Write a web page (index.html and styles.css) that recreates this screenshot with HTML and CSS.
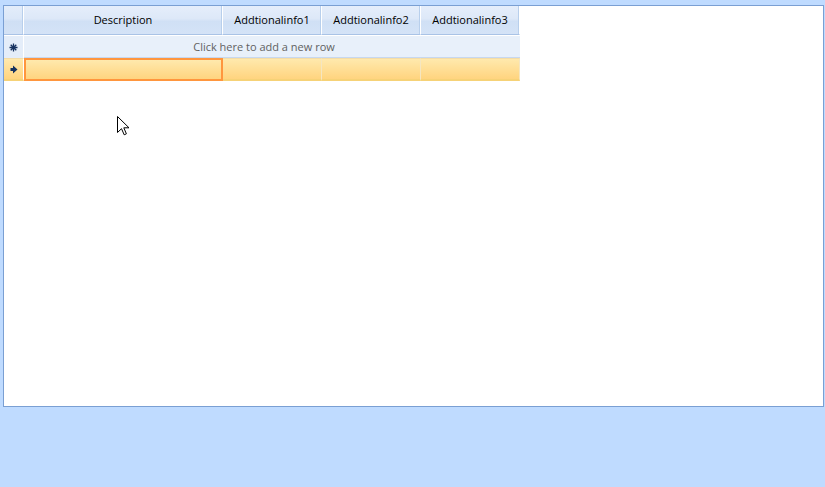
FILE: index.html
```html
<!DOCTYPE html>
<html>
<head>
<meta charset="utf-8">
<link rel="stylesheet" href="styles.css">
</head>
<body>
<div class="panel">
  <div class="grid">
    <div class="hcell corner"></div>
    <div class="hcell">Description</div>
    <div class="hcell">Addtionalinfo1</div>
    <div class="hcell">Addtionalinfo2</div>
    <div class="hcell">Addtionalinfo3</div>

    <div class="ind newind">
      <svg width="9" height="9" viewBox="0 0 9 9"><path d="M4.5 0.5v8M0.5 4.5h8M1.7 1.7l5.6 5.6M7.3 1.7l-5.6 5.6" stroke="#15315f" stroke-width="1.3"/></svg>
    </div>
    <div class="newrow">Click here to add a new row</div>

    <div class="ind selind">
      <svg width="8" height="9" viewBox="0 0 8 9"><path d="M3 0.5L7.5 4.5L3 8.5V6H0.5V3H3Z" fill="#15315f"/></svg>
    </div>
    <div class="scell current"></div>
    <div class="scell"></div>
    <div class="scell"></div>
    <div class="scell"></div>
  </div>
  <svg class="cursor" width="13" height="20" viewBox="0 0 13 20"><path d="M0.5 0.5V16.5L4.5 12.7L7.2 18.8L9.4 17.8L6.8 11.8H12L0.5 0.5Z" fill="#fff" stroke="#000" stroke-width="1"/></svg>
</div>
</body>
</html>
```
FILE: styles.css
```css
html, body {
  margin: 0;
  padding: 0;
}
body {
  background: #bfdbff;
  width: 825px;
  height: 487px;
  overflow: hidden;
  font-family: "Open Sans", "DejaVu Sans", sans-serif;
  font-size: 11px;
}
.panel {
  position: relative;
  margin: 5px 0 0 3px;
  width: 819px;
  height: 400px;
  border: 1px solid #7a9fd3;
  background: #ffffff;
}
.grid {
  display: grid;
  grid-template-columns: 20px 199px 99px 99px 99px;
  grid-template-rows: 29px 23px 23px;
  width: 516px;
}
.hcell {
  display: flex;
  align-items: center;
  justify-content: center;
  background: linear-gradient(#e5eefb 0%, #dde8f8 45%, #d0e0f5 55%, #d4e3f7 100%);
  border-right: 1px solid #ffffff;
  border-bottom: 1px solid #a9c3e6;
  box-shadow: inset -1px 0 0 #b8cfec;
  color: #000;
  box-sizing: border-box;
  padding-bottom: 1px;
}
.corner {
  background: linear-gradient(#e3edfa 0%, #dbe7f8 45%, #cfdff4 55%, #d3e2f6 100%);
}
.ind {
  display: flex;
  align-items: center;
  justify-content: center;
  box-sizing: border-box;
  border-right: 1px solid #ffffff;
}
.newind {
  background: #e4edf9;
  border-top: 1px solid #ffffff;
}
.newrow {
  grid-column: 2 / 6;
  display: flex;
  align-items: center;
  justify-content: center;
  padding-right: 16px;
  background: #e8f0fa;
  color: #616161;
  border-top: 1px solid #ffffff;
  border-bottom: 1px solid #c7d8ef;
  box-sizing: border-box;
}
.selind {
  background: linear-gradient(#ffe9ad, #ffd47f);
  border-bottom: 2px solid #f6d277;
  border-top: 1px solid #f3dca7;
}
.scell {
  background: linear-gradient(#ffe9ad, #ffd47f);
  border-right: 1px solid #f5e6c0;
  border-top: 1px solid #f3dca7;
  border-bottom: 2px solid #f6d277;
  box-sizing: border-box;
}
.scell.current {
  border: 2px solid #ff963e;
}
.cursor {
  position: absolute;
  left: 113px;
  top: 110px;
}
```
